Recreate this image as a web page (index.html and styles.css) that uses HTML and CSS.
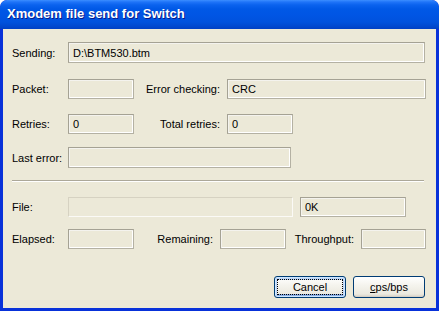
FILE: index.html
```html
<!DOCTYPE html>
<html>
<head>
<meta charset="utf-8">
<link rel="stylesheet" href="styles.css">
</head>
<body>
<div class="window">
  <div class="titlebar"><span class="title">Xmodem file send for Switch</span></div>
  <div class="client">
    <div class="row r1">
      <span class="lbl">Sending:</span>
      <span class="field w-send">D:\BTM530.btm</span>
    </div>
    <div class="row r2">
      <span class="lbl">Packet:</span>
      <span class="field w-small"></span>
      <span class="lbl2 w-l2">Error checking:</span>
      <span class="field w-err">CRC</span>
    </div>
    <div class="row r3">
      <span class="lbl">Retries:</span>
      <span class="field w-small">0</span>
      <span class="lbl2 w-l2">Total retries:</span>
      <span class="field w-small">0</span>
    </div>
    <div class="row r4">
      <span class="lbl">Last error:</span>
      <span class="field w-last"></span>
    </div>
    <div class="sep"></div>
    <div class="row r5">
      <span class="lbl">File:</span>
      <span class="progress"></span>
      <span class="field w-ok">0K</span>
    </div>
    <div class="row r6">
      <span class="lbl">Elapsed:</span>
      <span class="field w-small"></span>
      <span class="lbl2 w-rem">Remaining:</span>
      <span class="field w-small"></span>
      <span class="lbl2 w-thr">Throughput:</span>
      <span class="field w-thrf"></span>
    </div>
    <div class="buttons">
      <button class="btn default">Cancel</button>
      <button class="btn"><u>c</u>ps/bps</button>
    </div>
  </div>
</div>
</body>
</html>
```

FILE: styles.css
```css
* { box-sizing: border-box; }
html, body { margin: 0; padding: 0; background: #fff; }
body { font-family: "Liberation Sans", Arial, sans-serif; font-size: 11px; color: #000; }

.window {
  width: 439px;
  height: 311px;
  display: flex;
  flex-direction: column;
  background: #0831d9;
  border-radius: 7px 7px 0 0;
  overflow: hidden;
}

.titlebar {
  height: 29px;
  flex: none;
  background: linear-gradient(to bottom,
    #3c8eff 0px, #1f74f8 2px, #0a62ee 5px, #0058e6 9px,
    #0055e4 15px, #0052dd 22px, #0049d0 26px, #0040c4 29px);
  display: flex;
  align-items: center;
  padding: 0 0 2px 7px;
  border-radius: 7px 7px 0 0;
}
.title {
  color: #fff;
  font-weight: bold;
  font-size: 13px;
  font-family: "Liberation Sans", Arial, sans-serif;
  text-shadow: 1px 1px 0 #0a1a8a;
}

.client {
  flex: 1;
  margin: 0 3px 3px 3px;
  background: #ece9d8;
  padding: 13px 0 0 9px;
  display: flex;
  flex-direction: column;
}

.row { display: flex; align-items: center; height: 20px; }
.r1 { height: 21px; }
.r2 { margin-top: 16px; }
.r3 { margin-top: 15px; }
.r4 { margin-top: 13px; height: 21px; }
.r5 { margin-top: 0; }
.r6 { margin-top: 12px; }

.lbl { width: 56px; flex: none; }
.lbl2 { flex: none; text-align: right; padding-right: 7px; }
.w-l2 { width: 93px; }
.w-rem { width: 86px; }
.w-thr { width: 75px; }

.field {
  flex: none;
  height: 100%;
  border: 1px solid #a5a294;
  border-right-color: #b4b1a3;
  border-bottom-color: #b4b1a3;
  box-shadow: inset 1px 1px 0 #f4f3ee, inset -1px -1px 0 #fff;
  display: flex;
  align-items: center;
  padding-left: 4px;
  white-space: nowrap;
}
.w-send { width: 357px; }
.w-small { width: 66px; }
.w-thrf { width: 65px; }
.w-err { width: 199px; }
.w-last { width: 223px; }
.w-ok { width: 106px; margin-left: 7px; }

.progress {
  flex: none;
  width: 225px;
  height: 100%;
  border: 1px solid #d6d2c2;
  border-right-color: #fbfaf6;
  border-bottom-color: #fbfaf6;
}

.sep {
  margin-top: 12px;
  margin-bottom: 15px;
  width: 412px;
  height: 2px;
  border-top: 1px solid #aca899;
  border-bottom: 1px solid #fff;
}

.buttons {
  margin-top: 27px;
  display: flex;
  justify-content: flex-end;
  gap: 7px;
  padding-right: 11px;
}
.btn {
  width: 72px;
  height: 22px;
  font-family: "Liberation Sans", Arial, sans-serif;
  font-size: 11px;
  color: #000;
  border: 1px solid #003c74;
  border-radius: 3px;
  background: linear-gradient(to bottom, #ffffff 0%, #f5f4ee 40%, #ebe9df 85%, #d6d0c5 100%);
  padding: 0;
  box-shadow: inset 0 -1px 0 #d6d0c5;
}
.btn.default {
  box-shadow: inset 0 0 0 1px #cee7ff, inset 0 1px 0 2px #bcd4f6, inset 0 -1px 0 2px #89ade4;
  outline: 1px dotted #000;
  outline-offset: -4px;
}
.btn u { text-decoration: underline; }
```
